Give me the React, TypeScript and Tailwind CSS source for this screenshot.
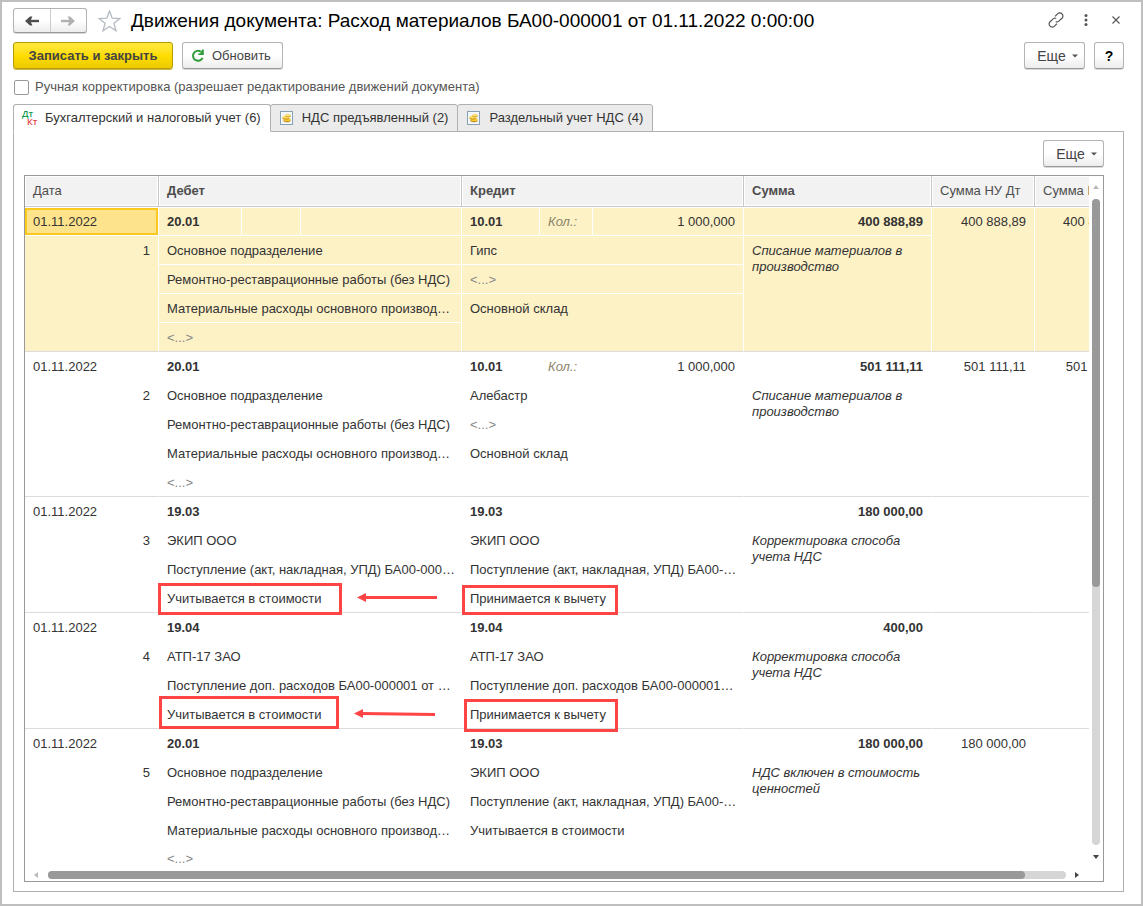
import type { ReactNode } from 'react';

type Mark = 'debitA' | 'creditA' | 'debitB' | 'creditB';

interface Line {
  text: string;
  mark?: Mark;
  arrow?: 'straight' | 'tilted';
}

interface Entry {
  id: number;
  date: string;
  debit: string;
  debitLines: Line[];
  credit: string;
  quantity?: string;
  creditLines: Line[];
  sum: string;
  note: string;
  taxDebit?: string;
  taxCredit?: string;
}

const EMPTY = '<...>';

const materialLines: Line[] = [
  { text: 'Основное подразделение' },
  { text: 'Ремонтно-реставрационные работы (без НДС)' },
  { text: 'Материальные расходы основного производ…' },
  { text: EMPTY },
];

const entries: Entry[] = [
  {
    id: 1,
    date: '01.11.2022',
    debit: '20.01',
    debitLines: materialLines,
    credit: '10.01',
    quantity: '1 000,000',
    creditLines: [{ text: 'Гипс' }, { text: EMPTY }, { text: 'Основной склад' }],
    sum: '400 888,89',
    note: 'Списание материалов в производство',
    taxDebit: '400 888,89',
    taxCredit: '400 888,89',
  },
  {
    id: 2,
    date: '01.11.2022',
    debit: '20.01',
    debitLines: materialLines,
    credit: '10.01',
    quantity: '1 000,000',
    creditLines: [{ text: 'Алебастр' }, { text: EMPTY }, { text: 'Основной склад' }],
    sum: '501 111,11',
    note: 'Списание материалов в производство',
    taxDebit: '501 111,11',
    taxCredit: '501 111,11',
  },
  {
    id: 3,
    date: '01.11.2022',
    debit: '19.03',
    debitLines: [
      { text: 'ЭКИП ООО' },
      { text: 'Поступление (акт, накладная, УПД) БА00-000…' },
      { text: 'Учитывается в стоимости', mark: 'debitA', arrow: 'straight' },
    ],
    credit: '19.03',
    creditLines: [
      { text: 'ЭКИП ООО' },
      { text: 'Поступление (акт, накладная, УПД) БА00-…' },
      { text: 'Принимается к вычету', mark: 'creditA' },
    ],
    sum: '180 000,00',
    note: 'Корректировка способа учета НДС',
  },
  {
    id: 4,
    date: '01.11.2022',
    debit: '19.04',
    debitLines: [
      { text: 'АТП-17 ЗАО' },
      { text: 'Поступление доп. расходов БА00-000001 от …' },
      { text: 'Учитывается в стоимости', mark: 'debitB', arrow: 'tilted' },
    ],
    credit: '19.04',
    creditLines: [
      { text: 'АТП-17 ЗАО' },
      { text: 'Поступление доп. расходов БА00-000001…' },
      { text: 'Принимается к вычету', mark: 'creditB' },
    ],
    sum: '400,00',
    note: 'Корректировка способа учета НДС',
  },
  {
    id: 5,
    date: '01.11.2022',
    debit: '20.01',
    debitLines: materialLines,
    credit: '19.03',
    creditLines: [
      { text: 'ЭКИП ООО' },
      { text: 'Поступление (акт, накладная, УПД) БА00-…' },
      { text: 'Учитывается в стоимости' },
    ],
    sum: '180 000,00',
    note: 'НДС включен в стоимость ценностей',
    taxDebit: '180 000,00',
  },
];

const markClass: Record<Mark, string> = {
  debitA: '-left-px -top-px h-8 w-[184px]',
  creditA: 'left-0 top-px h-[30px] w-[156px]',
  debitB: 'left-0 -top-1 h-[33px] w-[180px]',
  creditB: 'left-0.5 -top-px h-[33px] w-[154px]',
};

function RefreshIcon() {
  return (
    <svg width="14" height="14" viewBox="0 0 14 14" fill="none" aria-hidden="true">
      <path d="M9.8 2.6A5 5 0 1 0 11.6 8.8" stroke="#2f9e3a" strokeWidth="2" />
      <path d="M12.8 0.4V6H7.2V4.6L9 4.4L11.2 0.4Z" fill="#2f9e3a" />
    </svg>
  );
}

function RegisterIcon() {
  return (
    <svg width="14" height="14" viewBox="0 0 14 14" aria-hidden="true">
      <rect x="0.5" y="0.5" width="12" height="13" fill="#fff" stroke="#86a0b6" />
      <rect x="1.5" y="1.5" width="10" height="11" fill="#eef4fa" />
      <ellipse cx="7" cy="9.6" rx="3.6" ry="1.6" fill="#c98a10" />
      <ellipse cx="7.2" cy="8.6" rx="3.6" ry="1.5" fill="#f7cf3a" />
      <ellipse cx="5.8" cy="7" rx="3.4" ry="1.5" fill="#c98a10" />
      <ellipse cx="5.8" cy="6.2" rx="3.4" ry="1.4" fill="#fbe067" />
      <ellipse cx="8" cy="4.9" rx="2.8" ry="1.3" fill="#d99a15" />
      <ellipse cx="8" cy="4.3" rx="2.8" ry="1.1" fill="#fce27a" />
    </svg>
  );
}

function DtKtIcon() {
  return (
    <span
      aria-hidden="true"
      className="flex w-4 flex-col text-left font-['Open_Sans','Noto_Sans',sans-serif] text-[9px] leading-[8px] font-semibold"
    >
      <span className="text-[#0c9a4a]">Дт</span>
      <span className="pl-[5px] text-[#e04545]">Кт</span>
    </span>
  );
}

function MoreButton() {
  return (
    <button
      type="button"
      className="flex h-[27px] w-[61px] items-center justify-center gap-1.5 rounded-[3px] border border-[#b3b3b3] border-b-[#999] bg-linear-to-b from-white from-50% to-[#ececec] pl-1.5 text-[14px] text-[#444] shadow-[0_1px_0_#d8d8d8]"
    >
      Еще
      <svg width="6" height="4" viewBox="0 0 6 4" aria-hidden="true">
        <path d="M0 0.5H6L3 3.5Z" fill="#555" />
      </svg>
    </button>
  );
}

function Tab({ icon, active, children }: { icon: ReactNode; active?: boolean; children: ReactNode }) {
  return (
    <button
      type="button"
      role="tab"
      aria-selected={active ? true : false}
      className={
        active
          ? 'relative z-10 flex h-7 items-center gap-[7px] rounded-t-[3px] border border-[#b0b0b0] border-b-white bg-white pr-[9px] pl-2 pb-px whitespace-nowrap'
          : '-ml-px flex h-7 items-center gap-2 rounded-t-[3px] border border-[#b0b0b0] bg-[#ebebeb] pr-[9px] pl-[9px] pb-px whitespace-nowrap'
      }
    >
      {icon}
      {children}
    </button>
  );
}

function Arrow({ tilted }: { tilted: boolean }) {
  return (
    <svg
      className={tilted ? 'absolute top-2 left-[195px]' : 'absolute top-2 left-[198px]'}
      width="82"
      height="12"
      viewBox="0 0 82 12"
      aria-hidden="true"
    >
      <path d={tilted ? 'M7 5.5L81 6.5' : 'M7 5.5H80'} stroke="#fe4444" strokeWidth="3" />
      <path d="M0 5.5L9 1V10Z" fill="#fe4444" />
    </svg>
  );
}

interface CellLineProps {
  line: Line;
  ruled: boolean;
  size: string;
}

function CellLine({ line, ruled, size }: CellLineProps) {
  return (
    <div
      className={`relative flex items-center pl-2 whitespace-nowrap ${size} ${
        ruled ? 'border-y border-t-transparent border-b-white' : ''
      } ${line.text === EMPTY ? 'text-[#888]' : ''}`}
    >
      {line.text}
      {line.mark && <span className={`absolute z-10 border-3 border-[#fe4444] ${markClass[line.mark]}`} />}
      {line.arrow && <Arrow tilted={line.arrow === 'tilted'} />}
    </div>
  );
}

function EntryRow({ entry, selected, last }: { entry: Entry; selected: boolean; last: boolean }) {
  const cell = selected
    ? 'border-r border-b border-white border-b-[#dcdcdc] bg-[#fdf1c6] p-0 align-top'
    : `p-0 align-top border-r border-r-transparent ${last ? '' : 'border-b border-b-[#dcdcdc]'}`;
  const top = selected
    ? 'flex h-[29px] items-center border-y border-white'
    : 'flex h-[29px] items-center';
  const amount = selected
    ? 'flex h-[29px] items-center justify-end border-t border-white pr-2 whitespace-nowrap'
    : 'flex h-[29px] items-center justify-end pr-2 whitespace-nowrap';
  const divider = selected ? 'border-white' : 'border-transparent';
  const debitEnd = entry.debitLines.length - 1;
  const creditEnd = entry.creditLines.length - 1;
  return (
    <tr>
      <td className={cell}>
        <div className={selected ? 'h-[29px] border-y border-white' : 'h-[29px]'}>
          <div
            className={
              selected
                ? 'flex h-full items-center border-2 border-[#fbc81e] bg-[#fde48c] pl-1.5'
                : 'flex h-full items-center pl-2'
            }
          >
            {entry.date}
          </div>
        </div>
        <div className="flex h-[29px] items-center justify-end pr-2">{entry.id}</div>
      </td>
      <td className={cell}>
        <div className={top}>
          <b className={`flex h-full w-[83px] items-center border-r pl-2 ${divider}`}>{entry.debit}</b>
          <span className={`h-full w-[59px] border-r ${divider}`} />
        </div>
        {entry.debitLines.map((line, i) => (
          <CellLine
            key={i}
            line={line}
            ruled={selected && i < debitEnd}
            size={i < debitEnd ? 'h-[29px]' : last ? 'h-6 pt-1' : 'h-7 pt-px'}
          />
        ))}
      </td>
      <td className={cell}>
        <div className={top}>
          <b className={`flex h-full w-[78px] items-center border-r pl-2 ${divider}`}>{entry.credit}</b>
          {entry.quantity && (
            <>
              <i className={`flex h-full w-[53px] items-center border-r pl-2 text-[#8a8468] ${divider}`}>Кол.:</i>
              <span className="flex-1 pr-2 text-right">{entry.quantity}</span>
            </>
          )}
        </div>
        {entry.creditLines.map((line, i) => (
          <CellLine
            key={i}
            line={line}
            ruled={selected && i < creditEnd}
            size={i < creditEnd ? 'h-[29px]' : 'h-7 pt-px'}
          />
        ))}
      </td>
      <td className={cell}>
        <div className={`${top} justify-end pr-2 font-bold`}>{entry.sum}</div>
        <div className="pt-[7px] pr-2 pl-2 leading-4 italic">{entry.note}</div>
      </td>
      <td className={cell}>
        <div className={amount}>{entry.taxDebit}</div>
      </td>
      <td className={cell}>
        <div className={amount}>{entry.taxCredit}</div>
      </td>
    </tr>
  );
}

const columns = [
  { title: 'Дата', strong: false, width: 'w-[134px]' },
  { title: 'Дебет', strong: true, width: 'w-[303px]' },
  { title: 'Кредит', strong: true, width: 'w-[282px]' },
  { title: 'Сумма', strong: true, width: 'w-[188px]' },
  { title: 'Сумма НУ Дт', strong: false, width: 'w-[103px]' },
  { title: 'Сумма НУ Кт', strong: false, width: 'w-[102px]' },
];

export default function App() {
  return (
    <div className="min-h-screen border-2 border-[#bfbfbf] bg-white pt-1.5 pr-[17px] pb-[11px] pl-[11px] font-['Liberation_Sans',Arial,sans-serif] text-[13px] leading-4 text-[#333]">
      <header className="flex h-[25px] items-center">
        <div className="flex h-[25px] w-[74px] rounded-[3px] border border-[#b3b3b3] border-b-[#999] bg-linear-to-b from-white from-50% to-[#ececec] shadow-[0_1px_0_#d8d8d8]">
          <button type="button" aria-label="Назад" className="flex flex-1 items-center justify-center border-r border-[#ccc]">
            <svg width="14" height="10" viewBox="0 0 14 10" aria-hidden="true">
              <path d="M14 5H4" stroke="#4d4d4d" strokeWidth="2.4" />
              <path d="M0 5L5 0.4H7.4L5.4 5L7.4 9.6H5Z" fill="#4d4d4d" />
            </svg>
          </button>
          <button type="button" aria-label="Вперед" className="flex flex-1 items-center justify-center">
            <svg width="14" height="10" viewBox="0 0 14 10" aria-hidden="true">
              <path d="M0 5H10" stroke="#b0b0b0" strokeWidth="2.4" />
              <path d="M14 5L9 0.4H6.6L8.6 5L6.6 9.6H9Z" fill="#b0b0b0" />
            </svg>
          </button>
        </div>
        <button type="button" aria-label="В избранное" className="ml-[11px]">
          <svg width="23" height="22" viewBox="0 0 23 22" aria-hidden="true">
            <path
              d="M11.5 1L14.2 8.2L22 8.5L15.9 13.3L18 20.8L11.5 16.5L5 20.8L7.1 13.3L1 8.5L8.8 8.2Z"
              fill="#fff"
              stroke="#b4bac2"
              strokeWidth="1.3"
            />
          </svg>
        </button>
        <h1 className="ml-2.5 text-[19px] leading-6 whitespace-nowrap text-black">
          Движения документа: Расход материалов БА00-000001 от 01.11.2022 0:00:00
        </h1>
        <div className="ml-auto flex items-center pb-0.5 text-[#555]">
          <button type="button" aria-label="Получить ссылку">
            <svg width="16" height="16" viewBox="0 0 16 16" fill="none" stroke="#555" strokeWidth="1.2" aria-hidden="true">
              <path d="M7 4.4L9.8 1.6A2.7 2.7 0 0 1 13.8 1.8A2.9 2.9 0 0 1 14.2 6L10.6 9.4A2.4 2.4 0 0 1 7.8 9.6" />
              <path d="M9 11.6L6.2 14.4A2.7 2.7 0 0 1 2.2 14.2A2.9 2.9 0 0 1 1.8 10L5.4 6.6A2.4 2.4 0 0 1 8.2 6.4" />
            </svg>
          </button>
          <button type="button" aria-label="Меню" className="ml-5">
            <svg width="4" height="12" viewBox="0 0 4 12" fill="#555" aria-hidden="true">
              <circle cx="2" cy="1.6" r="1.5" />
              <circle cx="2" cy="6" r="1.5" />
              <circle cx="2" cy="10.4" r="1.5" />
            </svg>
          </button>
          <button type="button" aria-label="Закрыть" className="mr-1 ml-6">
            <svg width="8" height="8" viewBox="0 0 8 8" aria-hidden="true">
              <path d="M0.5 0.5L7.5 7.5M7.5 0.5L0.5 7.5" stroke="#555" strokeWidth="1.1" />
            </svg>
          </button>
        </div>
      </header>

      <div className="mt-[9px] flex items-center">
        <button
          type="button"
          className="h-[27px] w-40 rounded-[3px] border border-[#b59b00] bg-linear-to-b from-[#ffe93b] via-[#fedd00] to-[#ecca00] font-bold whitespace-nowrap text-[#444] shadow-[0_1px_0_#cdb94a]"
        >
          Записать и закрыть
        </button>
        <button
          type="button"
          className="ml-[9px] flex h-[27px] w-[101px] items-center gap-[7px] rounded-[3px] border border-[#b3b3b3] border-b-[#999] bg-linear-to-b from-white from-50% to-[#ececec] pl-2 text-[#444] shadow-[0_1px_0_#d8d8d8]"
        >
          <RefreshIcon />
          Обновить
        </button>
        <div className="ml-auto flex gap-[9px]">
          <MoreButton />
          <button
            type="button"
            aria-label="Справка"
            className="h-[27px] w-[30px] rounded-[3px] border border-[#b3b3b3] border-b-[#999] bg-linear-to-b from-white from-50% to-[#ececec] text-[14px] font-bold text-black shadow-[0_1px_0_#d8d8d8]"
          >
            ?
          </button>
        </div>
      </div>

      <label className="mt-2.5 flex h-4 items-center gap-1.5 pl-px text-[#555]">
        <input type="checkbox" className="size-[15px] appearance-none rounded-xs border border-[#999] bg-white" />
        Ручная корректировка (разрешает редактирование движений документа)
      </label>

      <div role="tablist" className="mt-[9px] -mb-px flex">
        <Tab active icon={<DtKtIcon />}>
          Бухгалтерский и налоговый учет (6)
        </Tab>
        <Tab icon={<RegisterIcon />}>НДС предъявленный (2)</Tab>
        <Tab icon={<RegisterIcon />}>Раздельный учет НДС (4)</Tab>
      </div>

      <main className="border border-[#b0b0b0] pt-2 pr-[19px] pb-[9px] pl-2.5">
        <div className="mb-2 flex justify-end">
          <MoreButton />
        </div>
        <div className="border border-[#999]">
          <div className="flex">
            <div className="min-w-0 flex-1 overflow-hidden">
              <table className="w-[1112px] min-w-full table-fixed border-separate border-spacing-0">
                <thead>
                  <tr>
                    {columns.map((column) => (
                      <th
                        key={column.title}
                        className={`h-[31px] border-r border-b border-[#c8c8c8] bg-[#f2f2f2] p-0 pl-2 text-left whitespace-nowrap text-[#4d4d4d] shadow-[inset_0_0_0_1px_#fff] ${
                          column.width
                        } ${column.strong ? 'font-bold' : 'font-normal'}`}
                      >
                        {column.title}
                      </th>
                    ))}
                  </tr>
                </thead>
                <tbody>
                  {entries.map((entry, i) => (
                    <EntryRow key={entry.id} entry={entry} selected={i === 0} last={i === entries.length - 1} />
                  ))}
                </tbody>
              </table>
            </div>
            <div className="flex w-3.5 flex-col items-center pt-[9px] pr-px pb-2.5" aria-hidden="true">
              <svg width="6" height="4" viewBox="0 0 6 4">
                <path d="M0 4H6L3 0Z" fill="#bbb" />
              </svg>
              <div className="mt-2.5 mb-2.5 w-2 flex-1 rounded-full bg-[#d6d6d6]">
                <div className="h-3/5 rounded-full bg-[#999]" />
              </div>
              <svg width="6" height="4" viewBox="0 0 6 4">
                <path d="M0 0H6L3 4Z" fill="#444" />
              </svg>
            </div>
          </div>
          <div className="flex h-3 items-center pr-6 pl-[9px]" aria-hidden="true">
            <svg width="4" height="6" viewBox="0 0 4 6">
              <path d="M4 0V6L0 3Z" fill="#bbb" />
            </svg>
            <div className="mr-[9px] ml-2.5 h-2 flex-1 rounded-full bg-[#d6d6d6]">
              <div className="h-2 w-[96%] rounded-full bg-[#999]" />
            </div>
            <svg width="4" height="6" viewBox="0 0 4 6">
              <path d="M0 0V6L4 3Z" fill="#444" />
            </svg>
          </div>
        </div>
      </main>
    </div>
  );
}
